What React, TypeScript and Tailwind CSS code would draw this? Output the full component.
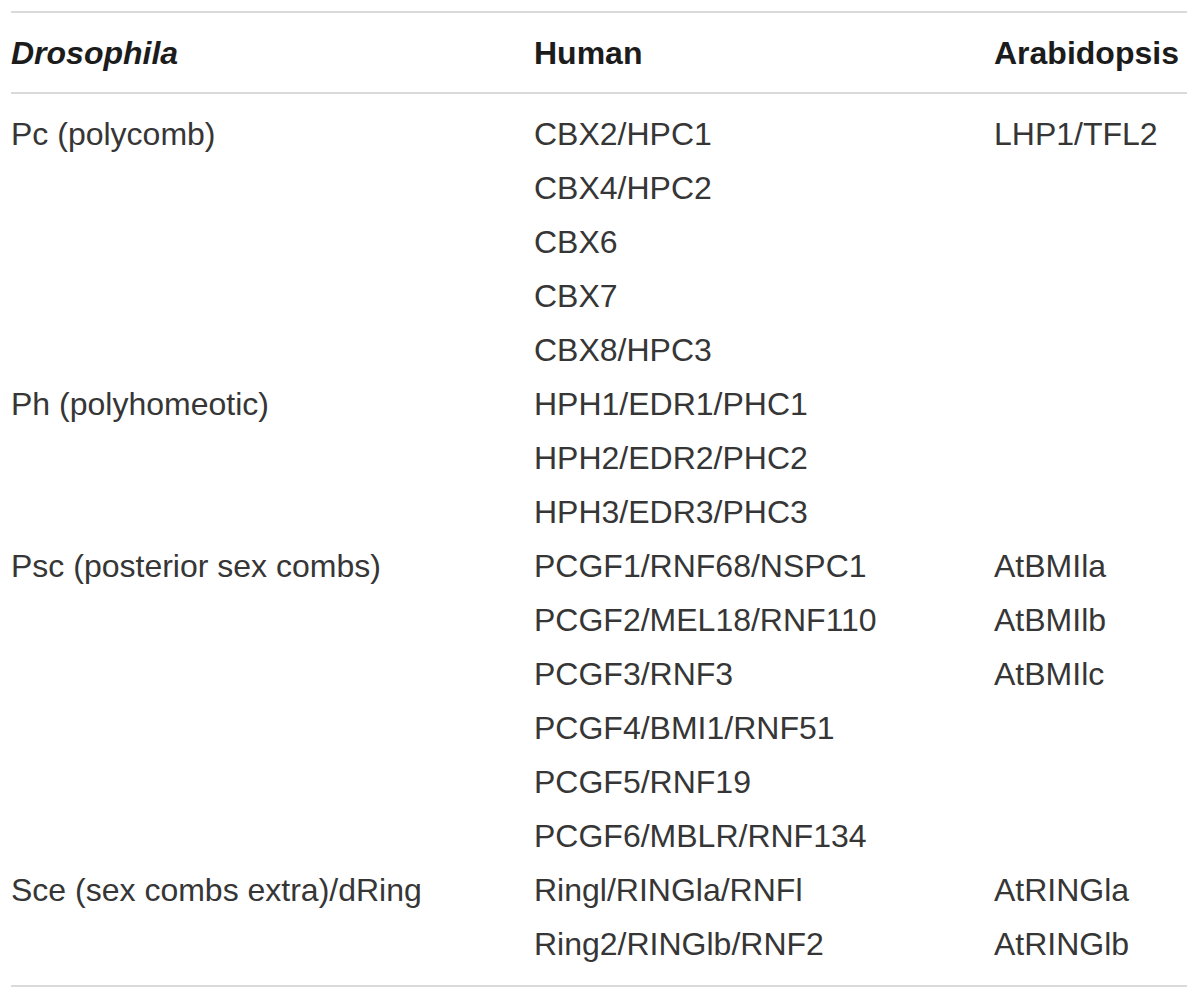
const rows: [string, string, string][] = [
  ["Pc (polycomb)", "CBX2/HPC1", "LHP1/TFL2"],
  ["", "CBX4/HPC2", ""],
  ["", "CBX6", ""],
  ["", "CBX7", ""],
  ["", "CBX8/HPC3", ""],
  ["Ph (polyhomeotic)", "HPH1/EDR1/PHC1", ""],
  ["", "HPH2/EDR2/PHC2", ""],
  ["", "HPH3/EDR3/PHC3", ""],
  ["Psc (posterior sex combs)", "PCGF1/RNF68/NSPC1", "AtBMIla"],
  ["", "PCGF2/MEL18/RNF110", "AtBMIlb"],
  ["", "PCGF3/RNF3", "AtBMIlc"],
  ["", "PCGF4/BMI1/RNF51", ""],
  ["", "PCGF5/RNF19", ""],
  ["", "PCGF6/MBLR/RNF134", ""],
  ["Sce (sex combs extra)/dRing", "Ringl/RINGla/RNFl", "AtRINGla"],
  ["", "Ring2/RINGlb/RNF2", "AtRINGlb"],
];

export default function App() {
  return (
    <div className="min-h-[1000px] bg-white px-[11px] pt-[11px] font-['Liberation_Sans',Arial,sans-serif]">
      <div className="w-[1176px] border-y-2 border-[#dadada]">
        {/* Header */}
        <div className="grid h-[81px] grid-cols-[523px_460px_1fr] items-center border-b-2 border-[#dadada] text-[32px] font-bold leading-[36px] text-[#1c1c1c]">
          <div className="italic">Drosophila</div>
          <div>Human</div>
          <div>Arabidopsis</div>
        </div>

        {/* Body */}
        <div className="pt-[13px] pb-[14px]">
          {rows.map(([d, h, a], i) => (
            <div
              key={i}
              className="grid h-[54px] grid-cols-[523px_460px_1fr] text-[32px] leading-[54px] text-[#363636] whitespace-nowrap"
            >
              <div>{d}</div>
              <div>{h}</div>
              <div>{a}</div>
            </div>
          ))}
        </div>
      </div>
    </div>
  );
}
